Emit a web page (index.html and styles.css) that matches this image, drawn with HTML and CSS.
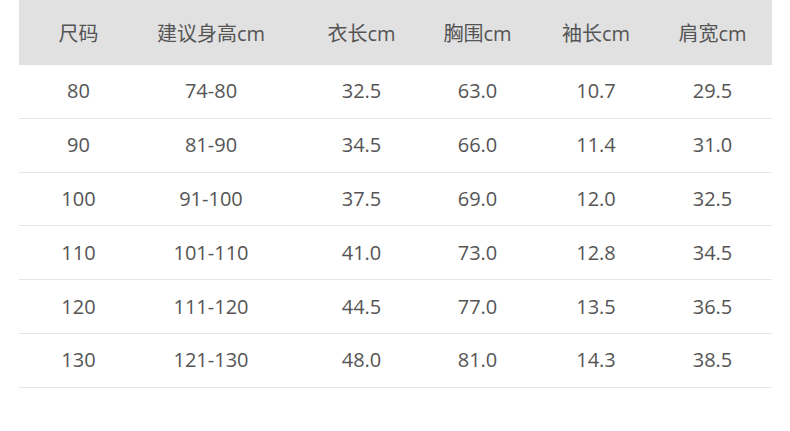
FILE: index.html
```html
<!DOCTYPE html>
<html lang="zh-CN">
<head>
<meta charset="utf-8">
<title>尺码表</title>
<link rel="stylesheet" href="styles.css">
</head>
<body>
<div class="size-table">
  <div class="row head">
    <div class="cell">尺码</div><div class="cell">建议身高cm</div><div class="cell">衣长cm</div><div class="cell">胸围cm</div><div class="cell">袖长cm</div><div class="cell">肩宽cm</div>
  </div>
  <div class="row">
    <div class="cell">80</div><div class="cell">74-80</div><div class="cell">32.5</div><div class="cell">63.0</div><div class="cell">10.7</div><div class="cell">29.5</div>
  </div>
  <div class="row">
    <div class="cell">90</div><div class="cell">81-90</div><div class="cell">34.5</div><div class="cell">66.0</div><div class="cell">11.4</div><div class="cell">31.0</div>
  </div>
  <div class="row">
    <div class="cell">100</div><div class="cell">91-100</div><div class="cell">37.5</div><div class="cell">69.0</div><div class="cell">12.0</div><div class="cell">32.5</div>
  </div>
  <div class="row">
    <div class="cell">110</div><div class="cell">101-110</div><div class="cell">41.0</div><div class="cell">73.0</div><div class="cell">12.8</div><div class="cell">34.5</div>
  </div>
  <div class="row">
    <div class="cell">120</div><div class="cell">111-120</div><div class="cell">44.5</div><div class="cell">77.0</div><div class="cell">13.5</div><div class="cell">36.5</div>
  </div>
  <div class="row">
    <div class="cell">130</div><div class="cell">121-130</div><div class="cell">48.0</div><div class="cell">81.0</div><div class="cell">14.3</div><div class="cell">38.5</div>
  </div>
</div>
</body>
</html>
```

FILE: styles.css
```css
html, body {
  margin: 0;
  padding: 0;
  background: #ffffff;
}

body {
  font-family: "Open Sans", "Noto Sans CJK SC", sans-serif;
  color: #555555;
}

.size-table {
  width: 753px;
  margin-left: 19px;
  display: flex;
  flex-direction: column;
}

.row {
  display: grid;
  grid-template-columns: 119px 146px 155px 77px 160px 73px;
  padding-right: 23px;
  box-sizing: border-box;
  height: 53.8px;
  border-bottom: 1px solid #e6e6e6;
  align-items: center;
  font-size: 20px;
}

.row.head {
  height: 65px;
  background: #e1e1e1;
  border-bottom: none;
  font-size: 20px;
  padding-top: 2px;
}

.cell {
  text-align: center;
  white-space: nowrap;
  line-height: 1;
}
```
